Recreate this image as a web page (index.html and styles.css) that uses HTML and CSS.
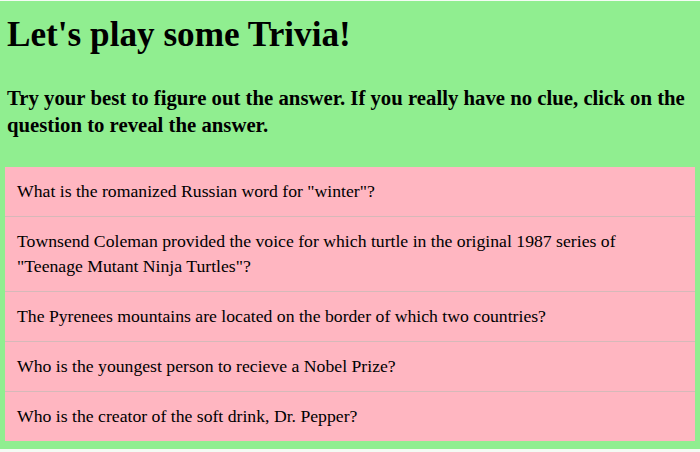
FILE: index.html
```html
<!DOCTYPE html>
<html>
<head>
<meta charset="utf-8">
<link rel="stylesheet" href="styles.css">
</head>
<body>
<div class="page">
  <h1 class="title">Let's play some Trivia!</h1>
  <h3 class="intro">Try your best to figure out the answer. If you really have no clue, click on the question to reveal the answer.</h3>
  <ul class="questions">
    <li class="question">What is the romanized Russian word for "winter"?</li>
    <li class="question">Townsend Coleman provided the voice for which turtle in the original 1987 series of "Teenage Mutant Ninja Turtles"?</li>
    <li class="question">The Pyrenees mountains are located on the border of which two countries?</li>
    <li class="question">Who is the youngest person to recieve a Nobel Prize?</li>
    <li class="question">Who is the creator of the soft drink, Dr. Pepper?</li>
  </ul>
</div>
</body>
</html>
```
FILE: styles.css
```css
html, body {
  margin: 0;
  padding: 0;
  background: #f4fbf4;
}
.page {
  margin-top: 1px;
  height: 448px;
  box-sizing: border-box;
  background: #90ee90;
  padding: 14px 5px 0 5px;
  font-family: "Liberation Serif", "Times New Roman", serif;
  color: #000;
}
.title {
  margin: 0 0 0 2px;
  font-size: 35.2px;
  line-height: 40px;
  font-weight: bold;
}
.intro {
  margin: 30px 0 0 2px;
  font-size: 20.75px;
  line-height: 27px;
  font-weight: bold;
}
.questions {
  list-style: none;
  margin: 28px 0 0 0;
  padding: 0;
  background: #ffb6c1;
}
.question {
  padding: 12px 12px;
  font-size: 17.7px;
  line-height: 25px;
}
.question + .question {
  border-top: 1px solid #d6b9b9;
}
```
